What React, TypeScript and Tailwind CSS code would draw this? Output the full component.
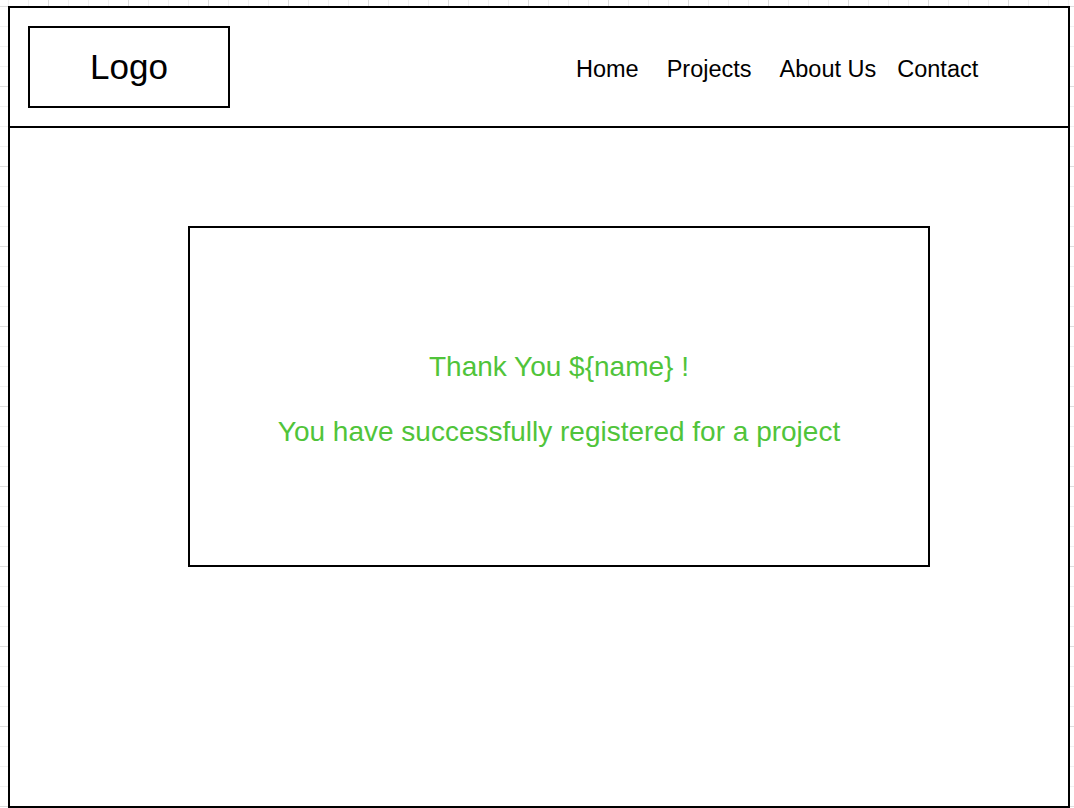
import React from "react";

export default function App() {
  return (
    <div
      className="w-[1074px] h-[808px] overflow-hidden pt-[6px] pl-[8px] bg-white [background-image:linear-gradient(to_right,#dedede_1px,transparent_1px),linear-gradient(to_bottom,#dedede_1px,transparent_1px),linear-gradient(to_right,#f1f1f1_1px,transparent_1px),linear-gradient(to_bottom,#f1f1f1_1px,transparent_1px)] [background-size:80px_80px,80px_80px,20px_20px,20px_20px] [background-position:48px_6px,48px_6px,8px_6px,8px_6px]"
      style={{ fontFamily: '"Liberation Sans", Arial, Helvetica, sans-serif' }}
    >
      <div className="w-[1062px] h-[802px] border-2 border-black bg-white flex flex-col">
        <header className="h-[120px] shrink-0 border-b-2 border-black flex items-center">
          <div className="ml-[18px] w-[202px] h-[82px] border-2 border-black flex items-center justify-center">
            <span className="text-[35px] text-black">Logo</span>
          </div>
          <nav className="ml-[346px] pt-[5px] flex items-center text-[23.5px] text-black">
            <span>Home</span>
            <span className="ml-[28px]">Projects</span>
            <span className="ml-[28px]">About Us</span>
            <span className="ml-[21px]">Contact</span>
          </nav>
        </header>
        <main className="flex-1">
          <div className="ml-[178px] mt-[98px] w-[742px] h-[341px] border-2 border-black pt-[5px] flex flex-col items-center justify-center gap-[33px] text-[#50c43a] text-[28px] leading-[32px]">
            <p>Thank You ${"{name}"} !</p>
            <p>You have successfully registered for a project</p>
          </div>
        </main>
      </div>
    </div>
  );
}
